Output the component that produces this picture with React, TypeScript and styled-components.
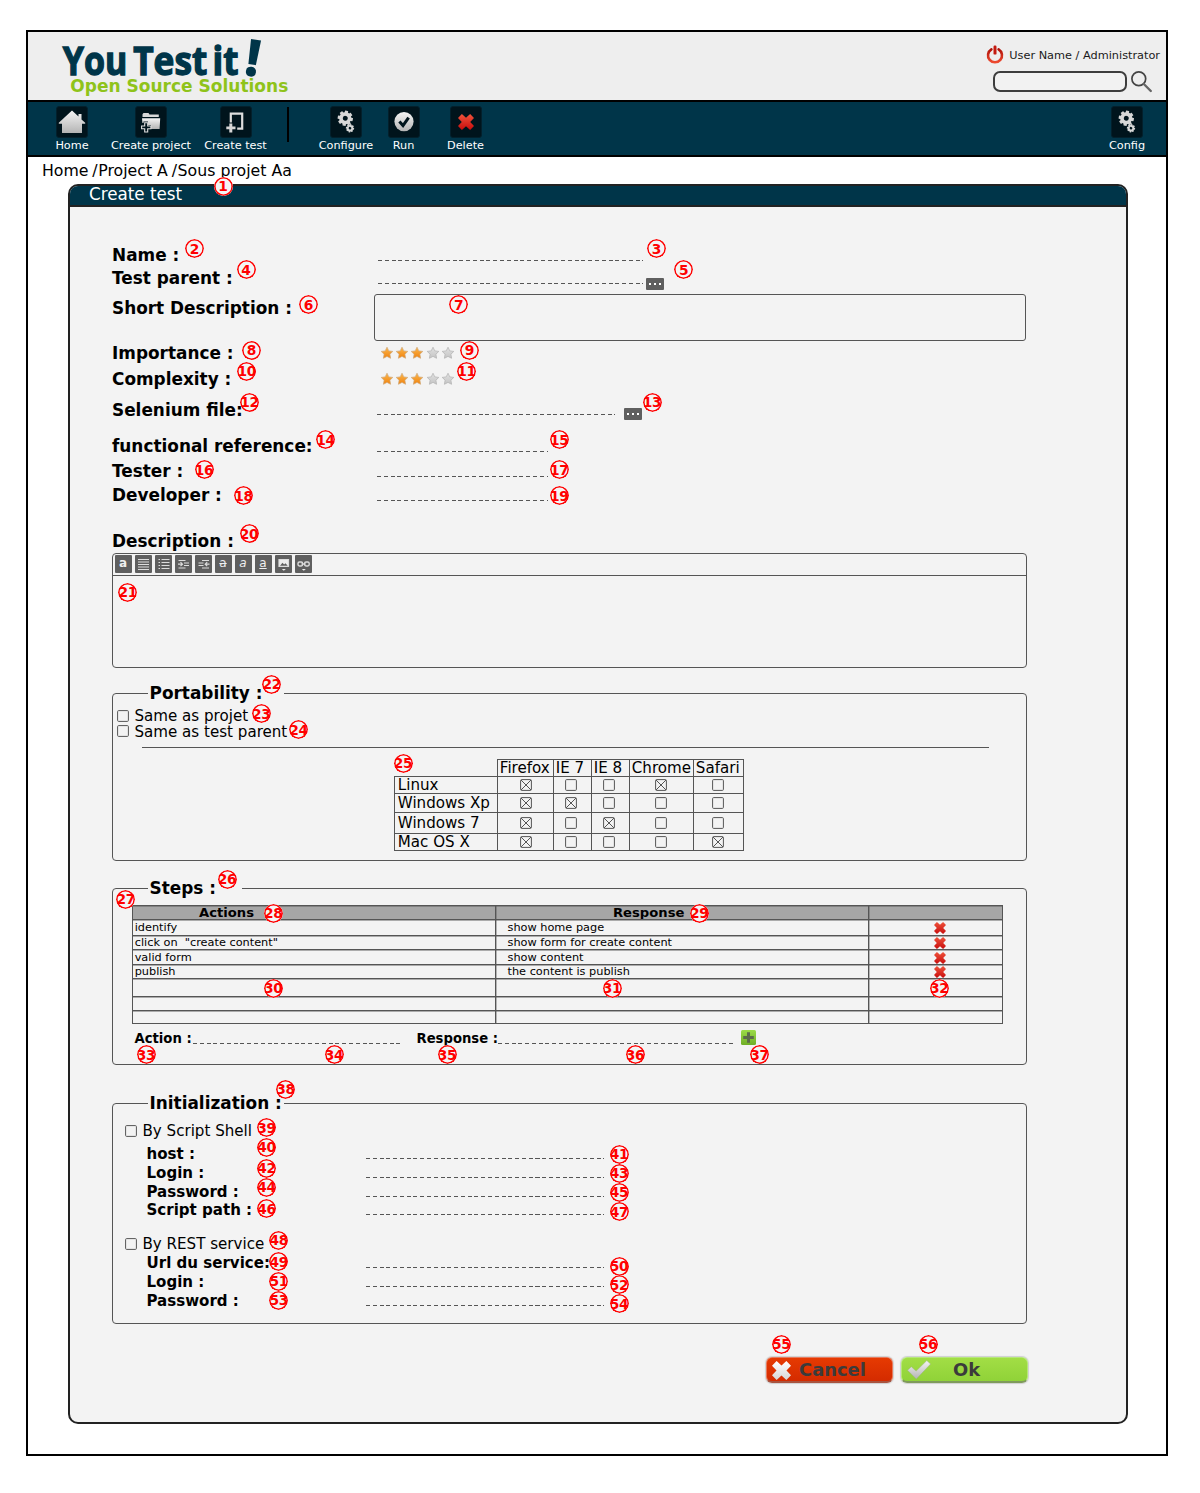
import React from "react";
import styled, { createGlobalStyle, css } from "styled-components";

const ink = "#555555";
const navy = "#003549";
const paper = "#f3f3f3";

const GlobalStyle = createGlobalStyle`
  * { box-sizing: border-box; }
  body {
    margin: 0;
    background: #fff;
    color: #000;
    font-family: "DejaVu Sans", sans-serif;
  }
`;

/* ---------- page frame ---------- */

const Sheet = styled.div`
  position: relative;
  width: 1200px;
  height: 1493px;
  padding: 30px 0 0 26px;
`;

const Frame = styled.div`
  width: 1142px;
  height: 1426px;
  border: 2px solid #000;
  background: #fff;
`;

const Header = styled.header`
  display: flex;
  justify-content: space-between;
  height: 70px;
  padding: 2px 6px 0 32px;
  background: #eeeeee;
  border-bottom: 2px solid #000;
`;

const HeaderTools = styled.div`
  display: flex;
  flex-direction: column;
  align-items: flex-end;
  padding-top: 11px;
`;

const UserLine = styled.div`
  display: flex;
  align-items: center;
  gap: 5px;
  height: 20px;
  font-size: 11.3px;
  line-height: 20px;
  color: #1a1a1a;
  white-space: nowrap;
`;

const UserName = styled.span`
  padding-top: 1px;
`;

const SearchLine = styled.div`
  display: flex;
  gap: 3px;
  margin: 6px 7px 0 0;
`;

const SearchBox = styled.div`
  width: 134px;
  height: 21px;
  border: 2px solid #3d3d3d;
  border-radius: 7px;
  background: #f2f2f2;
`;

/* ---------- toolbar ---------- */

const Toolbar = styled.nav`
  display: flex;
  height: 55px;
  padding: 4px 13px 0 14px;
  background: ${navy};
  border-bottom: 2px solid #000;
`;

const ToolItem = styled.div<{ $width: number; $end?: boolean }>`
  display: flex;
  flex-direction: column;
  align-items: center;
  width: ${(p) => p.$width}px;
  margin-left: ${(p) => (p.$end ? "auto" : "0")};
`;

const Tile = styled.span`
  display: flex;
  align-items: center;
  justify-content: center;
  width: 32px;
  height: 32px;
  border-radius: 3px;
  border: 1px solid #03202c;
  background: #00141c;
`;

const ToolLabel = styled.span`
  font-size: 11.25px;
  line-height: 16px;
  color: #fff;
  white-space: nowrap;
`;

const Divider = styled.span`
  width: 2px;
  height: 35px;
  margin: 1px 16px 0;
  background: #000;
`;

const Breadcrumb = styled.div`
  display: flex;
  height: 27px;
  padding-left: 14px;
  font-size: 15.75px;
  line-height: 28px;
  white-space: nowrap;
`;

const Slash = styled.span`
  margin: 0 0.6px 0 3.8px;
`;

/* ---------- panel ---------- */

const Panel = styled.main`
  width: 1060px;
  height: 1240px;
  margin-left: 40px;
  border: 2px solid #222;
  border-radius: 10px;
  background: ${paper};
  overflow: hidden;
`;

const PanelTitle = styled.h1`
  height: 21px;
  margin: 0;
  padding-left: 19px;
  border-bottom: 2px solid #222;
  background: ${navy};
  color: #fff;
  font-size: 16.75px;
  font-weight: 400;
  line-height: 17px;
`;

const Form = styled.div`
  display: flex;
  flex-direction: column;
  padding: 37px 0 0 42px;
`;

const Row = styled.div<{ $height: number }>`
  display: grid;
  grid-template-columns: 262px 1fr;
  align-items: start;
  height: ${(p) => p.$height}px;
`;

const Label = styled.span<{ $drop?: number }>`
  padding-top: ${(p) => p.$drop ?? 0}px;
  font-size: 16.9px;
  font-weight: 700;
  line-height: 22px;
  white-space: nowrap;
`;

const Field = styled.div<{ $indent?: number; $drop?: number; $gap?: number }>`
  display: flex;
  align-items: flex-start;
  gap: ${(p) => p.$gap ?? 0}px;
  padding: ${(p) => p.$drop ?? 0}px 0 0 ${(p) => p.$indent ?? 0}px;
`;

const Dashes = styled.span<{ $width: number; $drop?: number }>`
  display: block;
  flex: none;
  width: ${(p) => p.$width}px;
  height: 1px;
  margin-top: ${(p) => p.$drop ?? 0}px;
  background: repeating-linear-gradient(90deg, ${ink} 0 4px, transparent 4px 6.78px);
`;

const MoreButton = styled.button`
  display: flex;
  align-items: center;
  justify-content: center;
  gap: 3px;
  width: 18px;
  height: 12px;
  padding: 0;
  border: 0;
  border-radius: 1px;
  background: #5f5f5f;
`;

const Dot = styled.i`
  width: 2px;
  height: 2px;
  background: #fff;
`;

const TextArea = styled.div`
  width: 652px;
  height: 47px;
  border: 1px solid ${ink};
  border-radius: 3px;
`;

const Stars = styled.div`
  display: flex;
  gap: 1.3px;
`;

const Editor = styled.section`
  width: 915px;
  height: 115px;
  border: 1px solid ${ink};
  border-radius: 4px;
`;

const EditorBar = styled.div`
  display: flex;
  gap: 3px;
  height: 22px;
  padding: 1px 0 0 1.5px;
  border-bottom: 1px solid ${ink};
`;

const EditorButton = styled.button<{ $italic?: boolean; $line?: string; $bold?: boolean }>`
  display: flex;
  align-items: center;
  justify-content: center;
  width: 17px;
  height: 18px;
  padding: 0 0 2px;
  border: 0;
  border-radius: 1px;
  background: #5f5f5f;
  color: #efefef;
  font-family: "DejaVu Sans", sans-serif;
  font-size: 12px;
  line-height: 13px;
  font-weight: ${(p) => (p.$bold ? 700 : 400)};
  font-style: ${(p) => (p.$italic ? "italic" : "normal")};
  text-decoration: ${(p) => p.$line ?? "none"};
`;

/* ---------- groups ---------- */

const Group = styled.fieldset<{ $height: number; $top: number }>`
  width: 915px;
  height: ${(p) => p.$height}px;
  margin: ${(p) => p.$top}px 0 0;
  padding: 0;
  border: 1px solid ${ink};
  border-radius: 4px;
`;

const Legend = styled.legend<{ $width: number }>`
  width: ${(p) => p.$width}px;
  height: 22px;
  margin-left: 35px;
  padding: 0 0 0 1.5px;
  font-size: 16.9px;
  font-weight: 700;
  line-height: 22px;
  white-space: nowrap;
`;

const CheckRow = styled.label<{ $height: number; $left: number }>`
  display: flex;
  align-items: center;
  gap: 5.5px;
  height: ${(p) => p.$height}px;
  padding-left: ${(p) => p.$left}px;
  font-size: 15.1px;
  line-height: ${(p) => p.$height}px;
`;

const CheckList = styled.div`
  display: flex;
  flex-direction: column;
  padding-top: 4px;
`;

const CheckText = styled.span`
  padding-top: 1px;
`;

const Rule = styled.hr`
  width: 847px;
  height: 1px;
  margin: 8px 0 11px 29px;
  border: 0;
  background: ${ink};
`;

const Matrix = styled.div`
  display: grid;
  grid-template-columns: 103px 56px 38px 38px 64px 50px;
  grid-template-rows: 17px 17px 19px 21px 17px;
  width: 349px;
  margin-left: 281px;
`;

const MatrixCell = styled.div<{ $blank?: boolean; $pad?: number; $center?: boolean; $shift?: number }>`
  display: flex;
  align-items: center;
  justify-content: ${(p) => (p.$center ? "center" : "flex-start")};
  margin: 0 -1px -1px 0;
  padding: 0 ${(p) => p.$shift ?? 0}px ${(p) => (p.$center ? 1 : 0)}px ${(p) => p.$pad ?? 0}px;
  font-size: 15.1px;
  line-height: 16px;
  white-space: nowrap;
  ${(p) => !p.$blank && css`border: 1px solid ${ink};`}
`;

const StepTable = styled.div`
  display: flex;
  flex-direction: column;
  width: 871px;
  margin: 6px 0 0 19px;
  border-bottom: 1px solid ${ink};
`;

const StepLine = styled.div<{ $height: number; $head?: boolean }>`
  display: grid;
  grid-template-columns: 363px 373px 135px;
  height: ${(p) => p.$height}px;
  background: ${(p) => (p.$head ? "#a6a6a6" : "transparent")};
  font-size: ${(p) => (p.$head ? 13.15 : 11.3)}px;
  font-weight: ${(p) => (p.$head ? 700 : 400)};
  line-height: ${(p) => p.$height}px;
`;

const StepCell = styled.div<{ $pad: number }>`
  display: flex;
  align-items: center;
  min-width: 0;
  padding-left: ${(p) => p.$pad}px;
  border-top: 1px solid ${ink};
  border-left: 1px solid ${ink};
  box-shadow: inset 0 1px rgba(85, 85, 85, 0.45), inset 1px 0 rgba(85, 85, 85, 0.4);
  white-space: pre;
  &:first-child { box-shadow: inset 0 1px rgba(85, 85, 85, 0.45); }
  &:last-child { border-right: 1px solid ${ink}; }
`;

const AddLine = styled.div`
  display: flex;
  align-items: flex-start;
  padding: 6px 0 0 21.5px;
`;

const AddLabel = styled.span<{ $width: number; $indent?: number }>`
  width: ${(p) => p.$width}px;
  padding-left: ${(p) => p.$indent ?? 0}px;
  font-size: 13.2px;
  font-weight: 700;
  line-height: 17px;
  white-space: nowrap;
`;

const PlusSlot = styled.span`
  padding: 0 0 0 8px;
`;

const SubRow = styled.div`
  display: grid;
  grid-template-columns: 219.5px 1fr;
  height: 18.8px;
  padding-left: 33.5px;
`;

const SubLabel = styled.span`
  padding-top: 1px;
  font-size: 15.05px;
  font-weight: 700;
  line-height: 19px;
  white-space: nowrap;
`;

const InitBlock = styled.div<{ $top: number }>`
  display: flex;
  flex-direction: column;
  padding-top: ${(p) => p.$top}px;
`;

const Actions = styled.div`
  display: flex;
  gap: 8px;
  margin: 33px 0 0 654px;
`;

const ActionButton = styled.button<{ $ok?: boolean }>`
  display: flex;
  align-items: center;
  width: 127px;
  height: 26px;
  padding: 1px 0 0 5px;
  gap: ${(p) => (p.$ok ? 22 : 8)}px;
  border: 1px solid ${(p) => (p.$ok ? "#b5e878" : "#e77a5c")};
  border-bottom: 2px solid ${(p) => (p.$ok ? "#7f9a5b" : "#a8533f")};
  border-radius: 6px;
  background: ${(p) =>
    p.$ok
      ? "linear-gradient(#a2de45, #90d238)"
      : "linear-gradient(#e63a02, #d42b00)"};
  box-shadow: 0 0 1px 1px #cfcfcf;
  color: #3b3b3b;
  font-family: "DejaVu Sans", sans-serif;
  font-size: 17.9px;
  font-weight: 700;
  line-height: 24px;
`;

/* ---------- numbered pins ---------- */

const Pin = styled.span<{ $x: number; $y: number }>`
  position: absolute;
  left: ${(p) => p.$x - 9.5}px;
  top: ${(p) => p.$y - 9.5}px;
  display: flex;
  align-items: center;
  justify-content: center;
  width: 19px;
  height: 19px;
  border-radius: 50%;
  background: #f4f4f4;
  color: #ff0000;
  font-size: 13.8px;
  font-weight: 700;
  letter-spacing: -0.3px;
  line-height: 18px;
  overflow: hidden;
  &::after {
    content: "";
    position: absolute;
    inset: 0;
    box-shadow: inset 0 0 0 1.6px #ff0000;
    border-radius: 50%;
  }
`;

const pins: [number, number][] = [
  [223, 186], [194.3, 248.7], [656.3, 248.7], [246, 269.5], [683.7, 269.5],
  [308.5, 304.7], [458.7, 304.7], [251.3, 350], [469.3, 350], [246.7, 371],
  [466.5, 371], [249.5, 402], [652, 402], [325.5, 439.5], [559.3, 439.5],
  [204, 469.5], [559.3, 469.5], [243.5, 495.5], [559.3, 495.5], [249, 533.7],
  [127.7, 592], [271.7, 684.3], [261.3, 713.5], [298.5, 729.7], [403, 763],
  [227, 879], [125.7, 899], [273.3, 913], [699.3, 913], [273.3, 988],
  [612, 988], [939.3, 988], [146, 1054.5], [334, 1054.5], [447, 1054.5],
  [635, 1054.5], [759.5, 1054.5], [285.5, 1089], [266.5, 1127.7], [266.5, 1147.3],
  [619, 1154], [266.5, 1168], [619, 1173], [266.5, 1187], [619, 1192],
  [266.5, 1208.7], [619, 1211.5], [278.7, 1240.3], [278.7, 1261.5], [619, 1266],
  [278.7, 1281], [619, 1284.7], [278.7, 1300], [619, 1303.7], [781.3, 1344],
  [928, 1344],
];

/* ---------- drawings ---------- */

const HiddenSvg = styled.svg`
  position: absolute;
  width: 0;
  height: 0;
`;

const Block = styled.svg`
  display: block;
  flex: none;
  overflow: visible;
`;

const Gradients = () => (
  <HiddenSvg>
    <defs>
      <linearGradient id="silver" x1="0" y1="0" x2="0" y2="1">
        <stop offset="0" stopColor="#f4f4f4" />
        <stop offset="1" stopColor="#b4b4b4" />
      </linearGradient>
      <linearGradient id="white" x1="0" y1="0" x2="0" y2="1">
        <stop offset="0" stopColor="#ffffff" />
        <stop offset="1" stopColor="#d6d6d6" />
      </linearGradient>
      <linearGradient id="red" x1="0" y1="0" x2="0" y2="1">
        <stop offset="0" stopColor="#f0543c" />
        <stop offset="1" stopColor="#c80c0c" />
      </linearGradient>
      <linearGradient id="power" x1="0" y1="0" x2="0" y2="1">
        <stop offset="0" stopColor="#b01208" />
        <stop offset="1" stopColor="#ee4a30" />
      </linearGradient>
      <linearGradient id="gold" x1="0" y1="0" x2="0" y2="1">
        <stop offset="0" stopColor="#fbb84e" />
        <stop offset="1" stopColor="#f0820e" />
      </linearGradient>
      <linearGradient id="grey" x1="0" y1="0" x2="0" y2="1">
        <stop offset="0" stopColor="#e2e2e2" />
        <stop offset="1" stopColor="#c4c4c4" />
      </linearGradient>
      <linearGradient id="leaf" x1="0" y1="0" x2="0" y2="1">
        <stop offset="0" stopColor="#9cdc48" />
        <stop offset="1" stopColor="#6fae26" />
      </linearGradient>
    </defs>
  </HiddenSvg>
);

const Logo = () => (
  <Block width="240" height="66" viewBox="60 34 240 66">
    <g
      fill={navy}
      stroke={navy}
      strokeWidth="1.3"
      fontFamily='"Open Sans", "Noto Sans", sans-serif'
      fontWeight="700"
      fontSize="38.5"
    >
      <text x="62.8" y="75.3" textLength="64.5" lengthAdjust="spacingAndGlyphs">You</text>
      <text x="133.2" y="75.3" textLength="74" lengthAdjust="spacingAndGlyphs">Test</text>
      <text x="212.5" y="75.3" textLength="26" lengthAdjust="spacingAndGlyphs">it</text>
      <text x="243.5" y="75" fontSize="49" strokeWidth="1.8" transform="rotate(9 250 74)">!</text>
    </g>
    <text x="70.3" y="91.6" fill="#8fc31a" fontFamily='"DejaVu Sans", sans-serif' fontWeight="700" fontSize="17" textLength="218">
      Open Source Solutions
    </text>
  </Block>
);

const PowerIcon = () => (
  <Block width="18" height="20" viewBox="0 0 18 20" fill="none" stroke="url(#power)" strokeLinecap="round">
    <path d="M5.4 4.3a7 7 0 1 0 7.2 0" strokeWidth="2.6" />
    <rect x="7.5" y="0.6" width="3" height="9" rx="1.2" fill="#c41a10" stroke="none" />
  </Block>
);

const SearchIcon = () => (
  <Block width="23" height="22" viewBox="0 0 23 22" fill="none" stroke="#444">
    <circle cx="8.8" cy="7.8" r="6.9" strokeWidth="1.7" />
    <path d="M13.8 13l7 7" strokeWidth="2.4" strokeLinecap="round" stroke="#666" />
  </Block>
);

const HomeIcon = () => (
  <Block width="28" height="28" viewBox="0 0 28 28">
    <path d="M14 2.5L.8 14.8v1H4V25h20v-9.2h3.2v-1L23.5 11.5V6h-3v2.6z" fill="url(#silver)" />
  </Block>
);

const FolderIcon = () => (
  <Block width="28" height="28" viewBox="0 0 28 28">
    <path d="M5.5 8V6.3l1-1.3h5l1 1.6h9.3V9H5.5z" fill="#d8d8d8" />
    <path d="M5 10.3h18.2L22.6 21H14v-4h-3v-3.5H6.5v1.5L5.4 15z" fill="url(#silver)" />
    <path d="M7.7 14.8h3V18h3.2v2.8h-3.2V24h-3v-3.2H4.6V18h3.1z" fill="#00141c" stroke="#dedede" strokeWidth="1.1" />
  </Block>
);

const PageIcon = () => (
  <Block width="28" height="28" viewBox="0 0 28 28">
    <path d="M8.8 14.5V5.6h11.4V20.6h-5" fill="none" stroke="#dcdcdc" strokeWidth="2.2" />
    <path d="M7.3 15.5h3v3h3.2v2.8h-3.2v3.2h-3v-3.2h-3v-2.8h3z" fill="#d6d6d6" />
  </Block>
);

const toothAngles = [0, 45, 90, 135, 180, 225, 270, 315];

const Gear = ({ x, y, r }: { x: number; y: number; r: number }) => (
  <g transform={`translate(${x} ${y}) rotate(10) scale(${r / 10})`}>
    {toothAngles.map((a) => (
      <rect key={a} x="-2.3" y="-10.6" width="4.6" height="5" rx="0.6" transform={`rotate(${a})`} fill="#d4d4d4" />
    ))}
    <circle r="5.9" fill="none" stroke="#d8d8d8" strokeWidth="5" />
  </g>
);

const GearsIcon = () => (
  <Block width="28" height="28" viewBox="0 0 28 28">
    <Gear x={13.3} y={10.3} r={7.2} />
    <Gear x={18} y={20.2} r={3.9} />
  </Block>
);

const RunIcon = () => (
  <Block width="28" height="28" viewBox="0 0 28 28">
    <circle cx="14" cy="13.6" r="9.6" fill="url(#silver)" />
    <path d="M9.4 13.6l3.6 4 5.6-8" fill="none" stroke="#00141c" strokeWidth="3" />
  </Block>
);

const crossPath = "M3.9 0L8 3.8 12.1 0 16 3.9 12.2 8 16 12.1 12.1 16 8 12.2 3.9 16 0 12.1 3.8 8 0 3.9z";

const Cross = ({ size, fill }: { size: number; fill: string }) => (
  <Block width={size} height={size} viewBox="0 0 16 16">
    <path d={crossPath} fill={fill} />
  </Block>
);

const Star = ({ on }: { on: boolean }) => (
  <Block width="14" height="14" viewBox="0 0 14 14">
    <path
      d="M7 1.2l1.8 3.7 4 .5-2.9 2.8.7 4.1L7 10.4l-3.6 1.9.7-4.1L1.2 5.4l4-.5z"
      fill={on ? "url(#gold)" : "url(#grey)"}
      stroke={on ? "#cfa878" : "#b0b0b0"}
      strokeWidth="0.7"
    />
  </Block>
);

const Rating = ({ value }: { value: number }) => (
  <Stars>
    {[1, 2, 3, 4, 5].map((n) => (
      <Star key={n} on={n <= value} />
    ))}
  </Stars>
);

const More = () => (
  <MoreButton aria-label="Browse">
    <Dot />
    <Dot />
    <Dot />
  </MoreButton>
);

const Box = ({ checked }: { checked?: boolean }) => (
  <Block width="12" height="12" viewBox="0 0 12 12" fill="none" stroke={ink} strokeWidth="1">
    <rect x="0.6" y="0.6" width="10.8" height="10.8" rx="1" />
    {checked && <path d="M1 1l10 10M11 1L1 11" />}
  </Block>
);

const PlusIcon = () => (
  <Block width="15" height="15" viewBox="0 0 15 15">
    <rect width="15" height="15" rx="1.5" fill="url(#leaf)" />
    <path d="M6 2.2h3V6h3.8v3H9v3.8H6V9H2.2V6H6z" fill="#5c6b4b" />
  </Block>
);

const CheckMark = () => (
  <Block width="24" height="20" viewBox="0 0 24 20">
    <path d="M0.5 10.3l3.8-3.6 4.8 4.4L19.8 0.6l3.8 3.4L9.3 19z" fill="url(#silver)" stroke="#9bb37a" strokeWidth="0.5" />
  </Block>
);

const glyphs: Record<string, string> = {
  justify: "M3 4.5h11M3 7h11M3 9.5h11M3 12h11M3 14.5h11",
  list: "M3.5 4.5h1.5M6.5 4.5h8M3.5 7.5h1.5M6.5 7.5h8M3.5 10.5h1.5M6.5 10.5h8M3.5 13.5h1.5M6.5 13.5h8",
  indent: "M3.5 5.5h7M9 8h5M9 10.5h5M3.5 13h7M3 9.2h4M5.5 7.2l2 2-2 2",
  outdent: "M7 5.5h7M3.5 8h5M3.5 10.5h5M7 13h7M10.5 9.2h4M12.2 7.2l-2 2 2 2",
};

const EditorGlyph = ({ name }: { name: string }) => (
  <Block width="17" height="17" viewBox="0 0 17 17" fill="none" stroke="#dcdcdc" strokeWidth="1.2">
    {name === "image" ? (
      <>
        <path d="M4 4.5h9.5v7H4z" fill="#efefef" />
        <path d="M5 10.8l2.5-3 1.6 1.6 1.4-1.2 2.2 2.6z" fill="#5f5f5f" stroke="none" />
        <path d="M6.8 14l2 1.8 2-1.8z" fill="#efefef" stroke="none" />
      </>
    ) : name === "link" ? (
      <>
        <rect x="3" y="7" width="4.6" height="4" rx="1.4" strokeWidth="1.4" />
        <rect x="9.6" y="7" width="4.6" height="4" rx="1.4" strokeWidth="1.4" />
        <path d="M6.5 9h4" strokeWidth="1.4" />
        <path d="M6.8 14l2 1.8 2-1.8z" fill="#efefef" stroke="none" />
      </>
    ) : (
      <path d={glyphs[name]} />
    )}
  </Block>
);

/* ---------- data ---------- */

const browsers = [
  { name: "Firefox", shift: 0 },
  { name: "IE 7", shift: 3 },
  { name: "IE 8", shift: 3 },
  { name: "Chrome", shift: 1 },
  { name: "Safari", shift: 2 },
];

const systems: { name: string; on: string[] }[] = [
  { name: "Linux", on: ["Firefox", "Chrome"] },
  { name: "Windows Xp", on: ["Firefox", "IE 7"] },
  { name: "Windows 7", on: ["Firefox", "IE 8"] },
  { name: "Mac OS X", on: ["Firefox", "Safari"] },
];

const steps: { action: string; response: string; height: number; filled: boolean }[] = [
  { action: "identify", response: "show home page", height: 16, filled: true },
  { action: 'click on  "create content"', response: "show form for create content", height: 14, filled: true },
  { action: "valid form", response: "show content", height: 15, filled: true },
  { action: "publish", response: "the content is publish", height: 14, filled: true },
  { action: "", response: "", height: 18, filled: false },
  { action: "", response: "", height: 14, filled: false },
  { action: "", response: "", height: 13, filled: false },
];

const Tool = ({ label, width, end, children }: { label: string; width: number; end?: boolean; children: React.ReactNode }) => (
  <ToolItem $width={width} $end={end}>
    <Tile>{children}</Tile>
    <ToolLabel>{label}</ToolLabel>
  </ToolItem>
);

const LineRow = ({ label }: { label: string }) => (
  <SubRow>
    <SubLabel>{label}</SubLabel>
    <Dashes $width={238} $drop={14} />
  </SubRow>
);

export default function App() {
  return (
    <Sheet>
      <GlobalStyle />
      <Gradients />
      <Frame>
        <Header>
          <Logo />
          <HeaderTools>
            <UserLine>
              <PowerIcon />
              <UserName>User Name / Administrator</UserName>
            </UserLine>
            <SearchLine>
              <SearchBox />
              <SearchIcon />
            </SearchLine>
          </HeaderTools>
        </Header>

        <Toolbar>
          <Tool label="Home" width={60}><HomeIcon /></Tool>
          <Tool label="Create project" width={98}><FolderIcon /></Tool>
          <Tool label="Create test" width={71}><PageIcon /></Tool>
          <Divider />
          <Tool label="Configure" width={82}><GearsIcon /></Tool>
          <Tool label="Run" width={33}><RunIcon /></Tool>
          <Tool label="Delete" width={91}><Cross size={16} fill="url(#red)" /></Tool>
          <Tool label="Config" width={52} end><GearsIcon /></Tool>
        </Toolbar>

        <Breadcrumb>
          <span>Home</span>
          <Slash>/</Slash>
          <span>Project A</span>
          <Slash>/</Slash>
          <span>Sous projet Aa</span>
        </Breadcrumb>

        <Panel>
          <PanelTitle>Create test</PanelTitle>
          <Form>
            <Row $height={23}>
              <Label>Name :</Label>
              <Field $indent={4} $drop={16}><Dashes $width={265} /></Field>
            </Row>
            <Row $height={27}>
              <Label>Test parent :</Label>
              <Field $indent={4} $drop={11} $gap={3}><Dashes $width={265} $drop={5} /><More /></Field>
            </Row>
            <Row $height={48}>
              <Label $drop={3}>Short Description :</Label>
              <Field><TextArea /></Field>
            </Row>
            <Row $height={26}>
              <Label>Importance :</Label>
              <Field $indent={5.7} $drop={4}><Rating value={3} /></Field>
            </Row>
            <Row $height={31}>
              <Label>Complexity :</Label>
              <Field $indent={5.7} $drop={4}><Rating value={3} /></Field>
            </Row>
            <Row $height={36}>
              <Label>Selenium file:</Label>
              <Field $indent={3} $drop={9} $gap={9}><Dashes $width={238} $drop={6} /><More /></Field>
            </Row>
            <Row $height={25}>
              <Label>functional reference:</Label>
              <Field $indent={3} $drop={16}><Dashes $width={171} /></Field>
            </Row>
            <Row $height={24}>
              <Label>Tester :</Label>
              <Field $indent={3} $drop={16}><Dashes $width={171} /></Field>
            </Row>
            <Row $height={46}>
              <Label>Developer :</Label>
              <Field $indent={3} $drop={16}><Dashes $width={171} /></Field>
            </Row>
            <Row $height={23}>
              <Label>Description :</Label>
            </Row>

            <Editor>
              <EditorBar>
                <EditorButton $bold>a</EditorButton>
                <EditorButton><EditorGlyph name="justify" /></EditorButton>
                <EditorButton><EditorGlyph name="list" /></EditorButton>
                <EditorButton><EditorGlyph name="indent" /></EditorButton>
                <EditorButton><EditorGlyph name="outdent" /></EditorButton>
                <EditorButton $line="line-through">a</EditorButton>
                <EditorButton $italic>a</EditorButton>
                <EditorButton $line="underline">a</EditorButton>
                <EditorButton><EditorGlyph name="image" /></EditorButton>
                <EditorButton><EditorGlyph name="link" /></EditorButton>
              </EditorBar>
            </Editor>

            <Group $height={179} $top={14}>
              <Legend $width={136}>Portability :</Legend>
              <CheckList>
                <CheckRow $height={15} $left={4}><Box /><CheckText>Same as projet</CheckText></CheckRow>
                <CheckRow $height={16} $left={4}><Box /><CheckText>Same as test parent</CheckText></CheckRow>
              </CheckList>
              <Rule />
              <Matrix>
                <MatrixCell $blank />
                {browsers.map((b) => (
                  <MatrixCell key={b.name} $pad={1.8}>{b.name}</MatrixCell>
                ))}
                {systems.map((s) => (
                  <React.Fragment key={s.name}>
                    <MatrixCell $pad={2.8}>{s.name}</MatrixCell>
                    {browsers.map((b) => (
                      <MatrixCell key={b.name} $center $shift={b.shift}>
                        <Box checked={s.on.includes(b.name)} />
                      </MatrixCell>
                    ))}
                  </React.Fragment>
                ))}
              </Matrix>
            </Group>

            <Group $height={188} $top={16}>
              <Legend $width={94}>Steps :</Legend>
              <StepTable>
                <StepLine $height={14} $head>
                  <StepCell $pad={66}>Actions</StepCell>
                  <StepCell $pad={117}>Response</StepCell>
                  <StepCell $pad={0} />
                </StepLine>
                {steps.map((s, i) => (
                  <StepLine key={i} $height={s.height}>
                    <StepCell $pad={1.7}>{s.action}</StepCell>
                    <StepCell $pad={11.5}>{s.response}</StepCell>
                    <StepCell $pad={65.4}>
                      {s.filled && <Cross size={12} fill="url(#red)" />}
                    </StepCell>
                  </StepLine>
                ))}
              </StepTable>
              <AddLine>
                <AddLabel $width={58.5}>Action :</AddLabel>
                <Dashes $width={207} $drop={13} />
                <AddLabel $width={98} $indent={16.5}>Response :</AddLabel>
                <Dashes $width={235} $drop={13} />
                <PlusSlot><PlusIcon /></PlusSlot>
              </AddLine>
            </Group>

            <Group $height={232} $top={27}>
              <Legend $width={136}>Initialization :</Legend>
              <InitBlock $top={7}>
                <CheckRow $height={19} $left={12}><Box /><CheckText>By Script Shell</CheckText></CheckRow>
                <InitBlock $top={4}>
                  <LineRow label="host :" />
                  <LineRow label="Login :" />
                  <LineRow label="Password :" />
                  <LineRow label="Script path :" />
                </InitBlock>
              </InitBlock>
              <InitBlock $top={15}>
                <CheckRow $height={19} $left={12}><Box /><CheckText>By REST service</CheckText></CheckRow>
                <LineRow label="Url du service:" />
                <LineRow label="Login :" />
                <LineRow label="Password :" />
              </InitBlock>
            </Group>

            <Actions>
              <ActionButton><Cross size={19} fill="url(#white)" />Cancel</ActionButton>
              <ActionButton $ok><CheckMark />Ok</ActionButton>
            </Actions>
          </Form>
        </Panel>
      </Frame>

      {pins.map(([x, y], i) => (
        <Pin key={i} $x={x} $y={y}>{i + 1}</Pin>
      ))}
    </Sheet>
  );
}
